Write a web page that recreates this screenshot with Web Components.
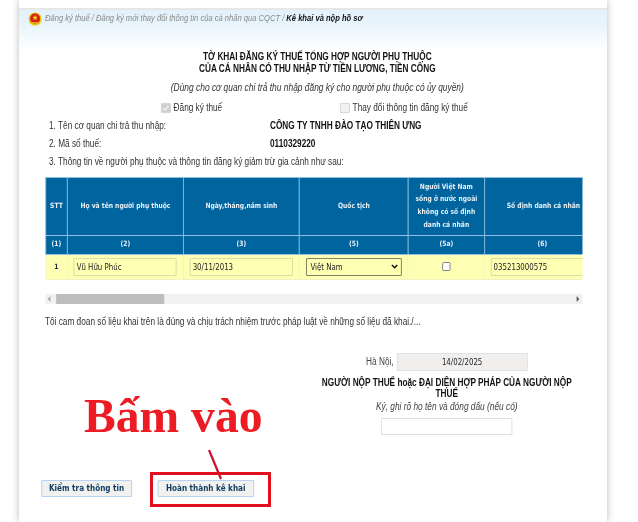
<!DOCTYPE html>
<html lang="vi">
<head>
<meta charset="utf-8">
<title>Kê khai và nộp hồ sơ</title>
<style>
  html, body { margin: 0; background: #fff; height: 100%; overflow: hidden; }
  body { font-family: "Liberation Sans", Arial, sans-serif; font-size: 10px; color: #222; }
  .pledge { margin-top: 12px; font: 10px/12px "Liberation Sans", sans-serif; color: #333; }
  .actions { display: flex; gap: 30.3px; margin: 45px 0 0 -4.85px; }
</style>
</head>
<body>
<template id="page-tpl">
  <style>
    :host {
      display: block;
      width: 588px;
      height: 522px;
      margin-left: 19px;
      background: #fff;
      box-shadow: 0 0 7px rgba(0,0,0,.28);
      overflow: hidden;
    }
    /* the reference is a screenshot squeezed sideways, so the sheet is laid out wider and scaled */
    .sheet {
      width: 712.7px;
      transform: scaleX(.825);
      transform-origin: 0 0;
      filter: blur(.25px);
    }
    .topbar { height: 8px; border-bottom: 2px solid #e6e6e6; }
    .body { padding: 0 30px 0 31.5px; display: flex; flex-direction: column; }
  </style>
  <div class="sheet">
    <div class="topbar"></div>
    <slot name="crumb"></slot>
    <div class="body"><slot></slot></div>
  </div>
</template>

<template id="crumb-tpl">
  <style>
    :host {
      display: flex;
      align-items: flex-start;
      gap: 3.6px;
      height: 41px;
      box-sizing: border-box;
      padding: 2px 0 0 10.9px;
      background: linear-gradient(#e2f1fb 0, #e8f4fb 35%, #fff 100%);
      font: italic 9.2px/13px "Liberation Sans", sans-serif;
      color: #8a8a8a;
    }
    svg { width: 17px; height: 14px; flex: none; }
  </style>
  <svg viewBox="0 0 14 14" preserveAspectRatio="none">
    <circle cx="7" cy="7" r="6.6" fill="#e8c80e"/>
    <circle cx="7" cy="6.6" r="5" fill="#d3211c"/>
    <path d="M7 3l.8 1.8 1.8.1-1.4 1.2.5 1.8L7 7l-1.7.9.5-1.8-1.4-1.2 1.8-.1z" fill="#f5d90a"/>
    <path d="M3.6 10h6.8v1.2H3.6z" fill="#e8a70e"/>
  </svg>
  <span><slot></slot></span>
</template>

<template id="head-tpl">
  <style>
    :host { display: block; text-align: center; color: #111; padding-left: 9px; }
    .t { font: bold 10px/12px "Liberation Sans", sans-serif; }
    .s { font: italic 10.2px/12px "Liberation Sans", sans-serif; color: #333; margin-top: 6.5px; }
  </style>
  <div class="t"><slot name="title"></slot></div>
  <div class="s"><slot name="sub"></slot></div>
</template>

<template id="checks-tpl">
  <style>
    :host {
      display: grid;
      grid-template-columns: 217px auto;
      margin: 7px 0 0 140.6px;
      height: 14px;
      font: 10px/14px "Liberation Sans", sans-serif;
      color: #333;
    }
    label { display: flex; align-items: center; gap: 3.6px; }
    .b { width: 9.7px; height: 8px; border: 1px solid #d4d4d4; background: #f2f2f2; border-radius: 1px; }
    .on { background: #cfcfcf; position: relative; }
    .on::after { content: ""; position: absolute; left: 3.2px; top: .5px; width: 2.5px; height: 5px; border: solid #fff; border-width: 0 1.2px 1.2px 0; transform: rotate(40deg); }
  </style>
  <label><span class="b on"></span>Đăng ký thuế</label>
  <label><span class="b"></span>Thay đổi thông tin đăng ký thuế</label>
</template>

<template id="line-tpl">
  <style>
    :host {
      display: grid;
      grid-template-columns: 267.9px auto;
      height: 18px;
      padding-left: 4.85px;
      font: 10px/18px "Liberation Sans", sans-serif;
      color: #333;
      white-space: nowrap;
    }
    .v { font-weight: bold; color: #111; }
  </style>
  <span><slot name="k"></slot></span>
  <span class="v"><slot name="v"></slot></span>
</template>

<template id="table-tpl">
  <style>
    :host { display: block; margin-top: 6px; width: 651px; overflow: hidden; }
    table {
      border-collapse: collapse;
      table-layout: fixed;
      width: 678.8px;
      font-family: "DejaVu Sans", Verdana, sans-serif;
    }
    th {
      background: #00649f;
      color: #e6eff5;
      border: 1px solid #8fc0e0;
      font-size: 7.3px;
      line-height: 12.7px;
      font-weight: bold;
      padding: 0;
      text-align: center;
    }
    tr.h th { height: 57px; }
    tr.n th { height: 18px; }
    td {
      background: #ffffb4;
      border: 1px solid #f2f2c0;
      height: 24px;
      padding: 0;
      text-align: center;
      font: bold 7.3px "DejaVu Sans", sans-serif;
      color: #234;
    }
    .f {
      display: block;
      box-sizing: border-box;
      height: 18px;
      margin: 0 7.3px;
      border: 1px solid #d8d8a8;
      border-radius: 1px;
      background: #ffffb4;
      font: 8.5px/16px "DejaVu Sans", sans-serif;
      color: #222;
      padding-left: 2.4px;
      text-align: left;
    }
    .sel {
      border: 1px solid #77775a;
      display: flex;
      justify-content: space-between;
      align-items: center;
      padding: 0 3.6px 0 4.6px;
    }
    .cb { display: inline-block; width: 8.5px; height: 7px; border: 1px solid #777; border-radius: 1.5px; background: #fff; vertical-align: middle; }
    .long { width: 121px; margin-right: 0; }
    svg { width: 8.5px; height: 5px; }
  </style>
  <table>
    <colgroup><col style="width:26.7px"><col style="width:140.6px"><col style="width:140.6px"><col style="width:132.1px"><col style="width:92.1px"><col style="width:146.7px"></colgroup>
    <tr class="h">
      <th>STT</th><th>Họ và tên người phụ thuộc</th><th>Ngày,tháng,năm sinh</th><th>Quốc tịch</th>
      <th>Người Việt Nam<br>sống ở nước ngoài<br>không có số định<br>danh cá nhân</th>
      <th style="text-align:left;padding-left:26.7px;white-space:nowrap">Số định danh cá nhân</th>
    </tr>
    <tr class="n"><th>(1)</th><th>(2)</th><th>(3)</th><th>(5)</th><th>(5a)</th><th style="text-align:left;padding-left:64px">(6)</th></tr>
    <tr>
      <td>1</td>
      <td><span class="f">Vũ Hữu Phúc</span></td>
      <td><span class="f">30/11/2013</span></td>
      <td><span class="f sel">Việt Nam<svg viewBox="0 0 7 5" preserveAspectRatio="none"><path d="M.8 1l2.7 2.7L6.2 1" fill="none" stroke="#111" stroke-width="1.5"/></svg></span></td>
      <td><span class="cb"></span></td>
      <td><span class="f long">035213000575</span></td>
    </tr>
  </table>
</template>

<template id="scroll-tpl">
  <style>
    :host {
      display: flex;
      align-items: center;
      justify-content: space-between;
      width: 651px;
      height: 10px;
      margin-top: 14px;
      background: #f1f1f1;
      position: relative;
    }
    .a { width: 0; height: 0; border: 3px solid transparent; margin: 0 3.6px; }
    .l { border-right-color: #a3a3a3; border-left-width: 0; }
    .r { border-left-color: #505050; border-right-width: 0; }
    .th { position: absolute; left: 13.3px; top: 0; width: 130.9px; height: 10px; background: #bdbdbd; }
  </style>
  <span class="a l"></span><span class="th"></span><span class="a r"></span>
</template>

<template id="sign-tpl">
  <style>
    :host {
      display: block;
      width: 310px;
      margin: 25px 0 0 332px;
      color: #222;
      font: 10px/12px "Liberation Sans", sans-serif;
      text-align: center;
    }
    .place { display: flex; align-items: center; justify-content: flex-end; gap: 3.6px; height: 18px; margin-right: 57px; color: #444; }
    .date {
      width: 158.8px; height: 18px; box-sizing: border-box;
      background: #f0efee; border: 1px solid #e2e2e2;
      font: 8.5px/16px "DejaVu Sans", sans-serif; color: #222;
    }
    .who { font-weight: bold; color: #111; line-height: 11.5px; margin-top: 6px; }
    .note { font: italic 10.1px/13px "Liberation Sans", sans-serif; color: #444; }
    .box { width: 158.8px; height: 17px; box-sizing: border-box; border: 1px solid #dcdcdc; margin: 5px auto 0; background: #fff; }
  </style>
  <div class="place"><span>Hà Nội,</span><div class="date">14/02/2025</div></div>
  <div class="who"><slot name="who"></slot></div>
  <div class="note"><slot name="note"></slot></div>
  <div class="box"></div>
</template>

<template id="btn-tpl">
  <style>
    :host { display: inline-block; }
    button {
      display: block;
      height: 17px;
      min-width: 110px;
      box-sizing: border-box;
      padding: 0 8.7px;
      background: #f1f1f0;
      border: 1.5px solid #b0d0f2;
      border-radius: 1px;
      color: #123f63;
      font: bold 8.8px/14px "DejaVu Sans", sans-serif;
      white-space: nowrap;
    }
    :host([wide]) button { min-width: 117.6px; }
  </style>
  <button type="button"><slot></slot></button>
</template>

<template id="note-tpl">
  <style>
    :host { position: absolute; left: 0; top: 0; width: 638px; height: 522px; pointer-events: none; filter: blur(.25px); }
    .txt {
      position: absolute; left: 84px; top: 390px;
      font: bold 47.6px/52px "Liberation Serif", serif;
      color: #ed1c24;
      white-space: nowrap;
    }
    .frame { position: absolute; left: 150px; top: 472px; width: 121px; height: 35px; box-sizing: border-box; border: 3px solid #e2101f; }
    svg { position: absolute; left: 203px; top: 446px; width: 24px; height: 36px; }
  </style>
  <div class="txt"><slot></slot></div>
  <svg viewBox="0 0 24 36"><path d="M6 4l12 29" stroke="#c9102c" stroke-width="2.2" fill="none"/></svg>
  <div class="frame"></div>
</template>

<tx-page>
  <tx-crumb slot="crumb">Đăng ký thuế / Đăng ký mới thay đổi thông tin của cá nhân qua CQCT / <b style="color:#111">Kê khai và nộp hồ sơ</b></tx-crumb>
  <tx-head>
    <span slot="title">TỜ KHAI ĐĂNG KÝ THUẾ TỔNG HỢP NGƯỜI PHỤ THUỘC<br>CỦA CÁ NHÂN CÓ THU NHẬP TỪ TIỀN LƯƠNG, TIỀN CÔNG</span>
    <span slot="sub">(Dùng cho cơ quan chi trả thu nhập đăng ký cho người phụ thuộc có ủy quyền)</span>
  </tx-head>
  <tx-checks></tx-checks>
  <tx-line style="margin-top:2px"><span slot="k">1. Tên cơ quan chi trả thu nhập:</span><span slot="v">CÔNG TY TNHH ĐÀO TẠO THIÊN ƯNG</span></tx-line>
  <tx-line><span slot="k">2. Mã số thuế:</span><span slot="v">0110329220</span></tx-line>
  <tx-line><span slot="k">3. Thông tin về người phụ thuộc và thông tin đăng ký giảm trừ gia cảnh như sau:</span></tx-line>
  <tx-table></tx-table>
  <tx-scroll></tx-scroll>
  <div class="pledge">Tôi cam đoan số liệu khai trên là đúng và chịu trách nhiệm trước pháp luật về những số liệu đã khai./...</div>
  <tx-sign>
    <span slot="who">NGƯỜI NỘP THUẾ hoặc ĐẠI DIỆN HỢP PHÁP CỦA NGƯỜI NỘP THUẾ</span>
    <span slot="note">Ký, ghi rõ họ tên và đóng dấu (nếu có)</span>
  </tx-sign>
  <div class="actions">
    <tx-btn>Kiểm tra thông tin</tx-btn>
    <tx-btn wide>Hoàn thành kê khai</tx-btn>
  </div>
</tx-page>
<tx-note>Bấm vào</tx-note>

<script>
  const parts = {
    'tx-page': 'page-tpl',
    'tx-crumb': 'crumb-tpl',
    'tx-head': 'head-tpl',
    'tx-checks': 'checks-tpl',
    'tx-line': 'line-tpl',
    'tx-table': 'table-tpl',
    'tx-scroll': 'scroll-tpl',
    'tx-sign': 'sign-tpl',
    'tx-btn': 'btn-tpl',
    'tx-note': 'note-tpl'
  };

  Object.keys(parts).forEach((tag) => {
    customElements.define(tag, class extends HTMLElement {
      constructor() {
        super();
        this.attachShadow({ mode: 'open' });
        let tpl = document.getElementById(parts[tag]);
        this.shadowRoot.appendChild(tpl.content.cloneNode(true));
      }
    });
  });
</script>
</body>
</html>
